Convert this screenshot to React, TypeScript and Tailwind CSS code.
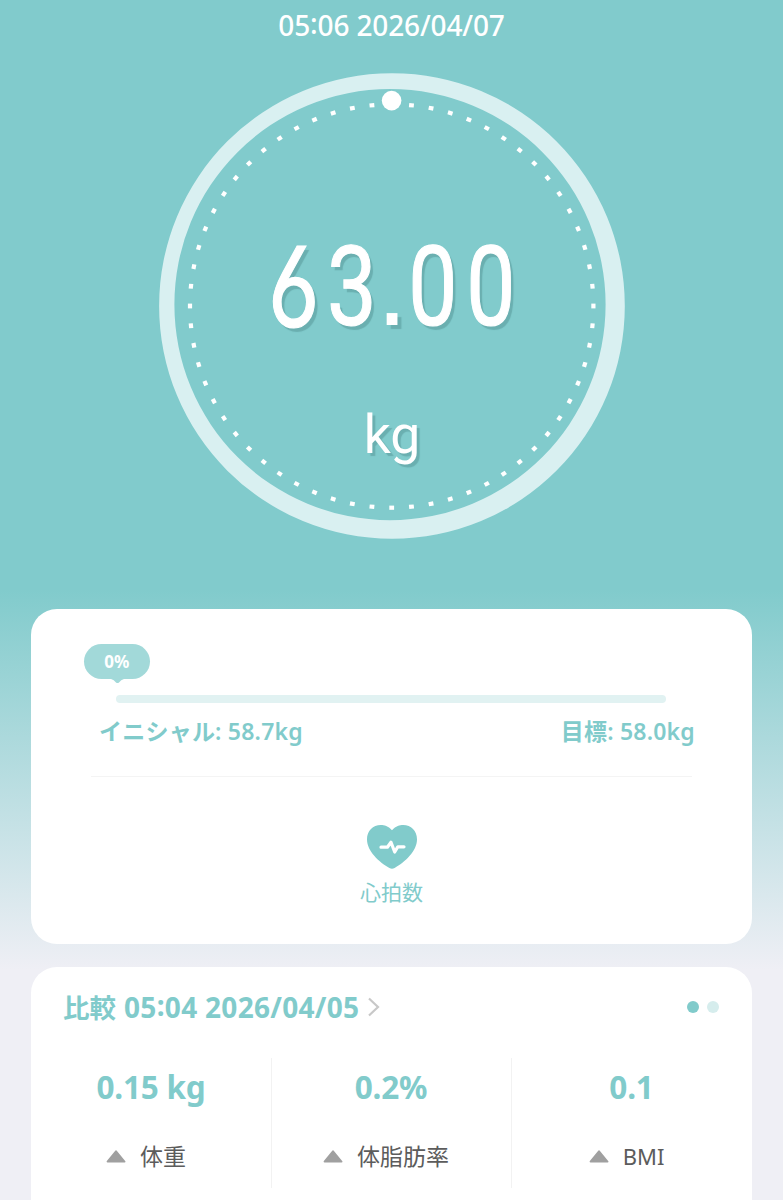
const TICKS = Array.from({ length: 64 }, (_, i) => i * 5.625);

function Gauge() {
  return (
    <svg className="absolute inset-0" width="468" height="468" viewBox="0 0 468 468">
      <path
        fill="#d9f0f1"
        fillRule="evenodd"
        d="M234 1.2a232.8 232.8 0 1 1 0 465.6a232.8 232.8 0 1 1 0-465.6zM232 17a215.6 215.6 0 1 0 0 431.2a215.6 215.6 0 1 0 0-431.2z"
      />
      {TICKS.map((a) => (
        <rect key={a} x="231.3" y="30.200" width="4.8" height="4.200" fill="#fff" transform={`rotate(${a} 233.7 234)`} />
      ))}
      <circle cx="233.6" cy="28.6" r="9.8" fill="#fff" />
    </svg>
  );
}

function Heart() {
  return (
    <svg width="50" height="44" viewBox="0 0 50 44">
      <path
        fill="#81cbcb"
        d="M25 5.2C29 1 32.6 0 36.2 0C44 0 50 6 50 14.2C50 26 38 37 27.600 43Q25 44.600 22.400 43C12 37 0 26 0 14.2C0 6 6 0 13.8 0C17.4 0 21 1 25 5.2z"
      />
      <path
        d="M14 22.2H20.400L24 17.200L27.700 27L30.800 21.800H37"
        fill="none"
        stroke="#fff"
        strokeWidth="3.2"
        strokeLinecap="round"
        strokeLinejoin="round"
      />
    </svg>
  );
}

function Up() {
  return (
    <svg width="20" height="13" viewBox="0 0 20 13">
      <path d="M10 1.3L18.4 11.6H1.6z" fill="#a0a0a0" stroke="#a0a0a0" strokeWidth="2" strokeLinejoin="round" />
    </svg>
  );
}

function Colon() {
  return <span className="relative -top-[2px]">:</span>;
}

function Stat({ value, label, box }: { value: string; label: string; box: string }) {
  return (
    <div className={`flex h-[130px] flex-col items-center ${box}`}>
      <div className="mt-[7px] h-[44px] pr-px text-[31.5px] leading-[44px] font-bold tracking-[-0.2px] text-[#81cbcb]">
        {value}
      </div>
      <div className="mt-[30px] flex h-[34px] items-center gap-[14px] pr-[11px] leading-[34px] text-[#5c5c5c]">
        <Up />
        <span className={label === "BMI" ? "text-[22px]" : "text-[23px]"}>{label}</span>
      </div>
    </div>
  );
}

export default function App() {
  return (
    <div className="h-[1200px] w-[783px] overflow-hidden bg-[linear-gradient(to_bottom,#81cbcc_0px,#81cbcc_590px,#efeff5_970px)] font-['Noto_Sans','Noto_Sans_CJK_JP',sans-serif] whitespace-nowrap">
      <header className="flex h-[50px] items-center justify-center text-[28px] font-medium tracking-[-0.15px] text-white">
        <span>
          05
          <Colon />
          06 2026/04/07
        </span>
      </header>

      <section className="relative mt-[22px] ml-[158px] flex h-[468px] w-[468px] flex-col items-center font-['Roboto',sans-serif] text-white">
        <Gauge />
        <div className="relative mt-[147px] flex h-[135px] text-[112px] leading-[135px] [-webkit-text-stroke:1.2px_white] [text-shadow:4px_4px_1px_#6aafb0]">
          <span className="flex w-[57.500px] scale-x-[.8] justify-center font-['Inter'] text-[111px] [font-feature-settings:'cv03']">
            6
          </span>
          <span className="flex w-[57.500px] scale-x-[.79] justify-center">3</span>
          <span className="flex w-[24px] justify-center font-['Liberation_Sans'] [-webkit-text-stroke:0px]">.</span>
          <span className="flex w-[57.500px] scale-x-[.78] justify-center">0</span>
          <span className="flex w-[57.500px] scale-x-[.78] justify-center">0</span>
        </div>
        <div className="relative mt-[46px] h-[70px] text-[53.5px] leading-[70px] [text-shadow:3px_3px_1px_#6aafb0]">
          kg
        </div>
      </section>

      <section className="mt-[68px] ml-[31px] flex h-[335px] w-[721px] flex-col rounded-[26px] bg-white text-[#81cbcb] relative top-px">
        <div className="relative mt-[35px] ml-[52.500px] flex h-[35px] w-[66.500px] items-center justify-center rounded-full bg-[#a2d9d9] text-[17px] font-bold text-white">
          <span>0%</span>
          <svg className="absolute top-[34.5px] left-[27px]" width="13" height="5" viewBox="0 0 13 5">
            <path d="M0 0H13Q10 1 8 3.4Q6.500 4.800 5 3.400Q3 1 0 0z" fill="#a2d9d9" />
          </svg>
        </div>
        <div className="mt-[16px] ml-[85px] h-[8px] w-[550px] rounded-full bg-[#e1f2f2]" />
        <div className="mt-[11px] mr-[57px] ml-[68px] flex h-[34px] items-center justify-between text-[23px] leading-[34px] font-semibold tracking-[0.22px]">
          <span>イニシャル: 58.7kg</span>
          <span>目標: 58.0kg</span>
        </div>
        <div className="mt-[28px] ml-[60px] h-px w-[601px] bg-[#f4f4f4]" />
        <div className="mt-[48px] flex flex-col items-center">
          <Heart />
          <span className="mt-[7px] text-[21px] leading-[32px]">心拍数</span>
        </div>
      </section>

      <section className="mt-[24px] ml-[31px] h-[260px] w-[721px] rounded-t-[26px] bg-white">
        <div className="flex h-[80px] items-center pr-[33px] pl-[32px]">
          <div className="flex items-baseline gap-[8px] font-semibold text-[#81cbcb]">
            <span className="text-[26.500px] leading-[40px]">比較</span>
            <span className="text-[28px] leading-[40px] font-bold tracking-[0.3px]">
              05
              <Colon />
              04 2026/04/05
            </span>
          </div>
          <svg className="ml-[8px]" width="14" height="20" viewBox="0 0 14 20">
            <path d="M2 1.500L11 10L2 18.500" fill="none" stroke="#c8c8c8" strokeWidth="2.200" />
          </svg>
          <div className="ml-auto flex gap-[8px]">
            <i className="size-[12px] rounded-full bg-[#81cbcb]" />
            <i className="size-[12px] rounded-full bg-[#d6eded]" />
          </div>
        </div>
        <div className="mt-[11px] ml-px flex">
          <Stat value="0.15 kg" label="体重" box="w-[240px] border-r border-[#f2f2f2]" />
          <Stat value="0.2%" label="体脂肪率" box="w-[240px] border-r border-[#f2f2f2]" />
          <Stat value="0.1" label="BMI" box="w-[240px]" />
        </div>
      </section>
    </div>
  );
}
